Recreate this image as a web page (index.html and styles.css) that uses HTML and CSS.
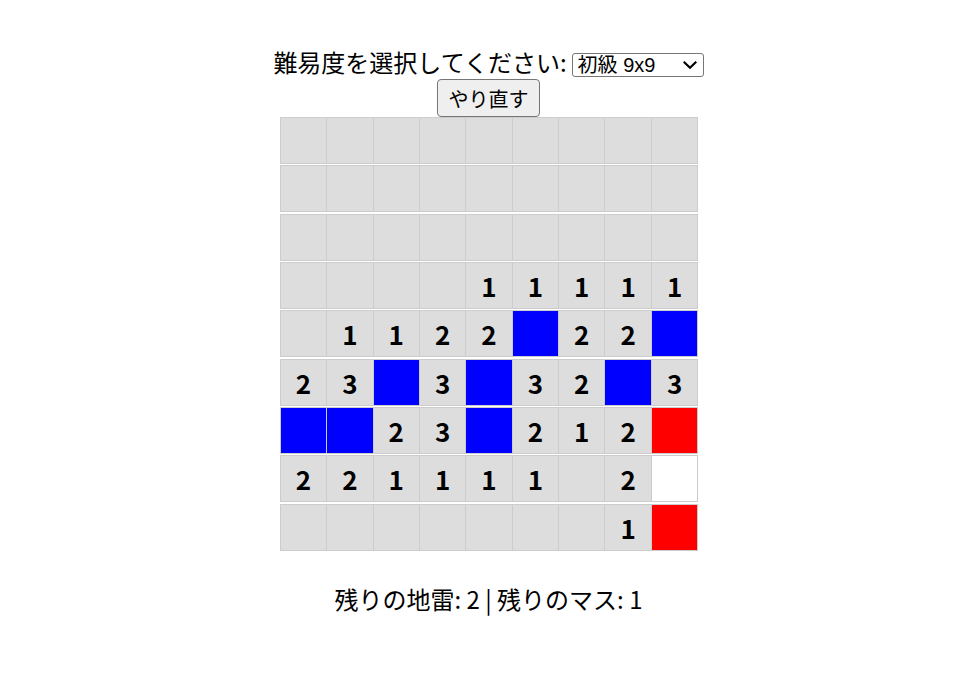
FILE: index.html
```html
<!DOCTYPE html>
<html lang="ja">
<head>
<meta charset="utf-8">
<title>マインスイーパー</title>
<link rel="stylesheet" href="styles.css">
</head>
<body>
<div class="top">
  <div class="level-row">
    <label class="label" for="level">難易度を選択してください:</label>
    <select id="level" class="level">
      <option>初級 9x9</option>
      <option>中級 16x16</option>
      <option>上級 30x16</option>
    </select>
  </div>
  <button class="retry" type="button">やり直す</button>
</div>
<div class="board">
  <div class="row"><div class="cell"></div><div class="cell"></div><div class="cell"></div><div class="cell"></div><div class="cell"></div><div class="cell"></div><div class="cell"></div><div class="cell"></div><div class="cell"></div></div>
  <div class="row"><div class="cell"></div><div class="cell"></div><div class="cell"></div><div class="cell"></div><div class="cell"></div><div class="cell"></div><div class="cell"></div><div class="cell"></div><div class="cell"></div></div>
  <div class="row"><div class="cell"></div><div class="cell"></div><div class="cell"></div><div class="cell"></div><div class="cell"></div><div class="cell"></div><div class="cell"></div><div class="cell"></div><div class="cell"></div></div>
  <div class="row"><div class="cell"></div><div class="cell"></div><div class="cell"></div><div class="cell"></div><div class="cell">1</div><div class="cell">1</div><div class="cell">1</div><div class="cell">1</div><div class="cell">1</div></div>
  <div class="row"><div class="cell"></div><div class="cell">1</div><div class="cell">1</div><div class="cell">2</div><div class="cell">2</div><div class="cell flag"></div><div class="cell">2</div><div class="cell">2</div><div class="cell flag"></div></div>
  <div class="row"><div class="cell">2</div><div class="cell">3</div><div class="cell flag"></div><div class="cell">3</div><div class="cell flag"></div><div class="cell">3</div><div class="cell">2</div><div class="cell flag"></div><div class="cell">3</div></div>
  <div class="row"><div class="cell flag"></div><div class="cell flag"></div><div class="cell">2</div><div class="cell">3</div><div class="cell flag"></div><div class="cell">2</div><div class="cell">1</div><div class="cell">2</div><div class="cell mine"></div></div>
  <div class="row"><div class="cell">2</div><div class="cell">2</div><div class="cell">1</div><div class="cell">1</div><div class="cell">1</div><div class="cell">1</div><div class="cell"></div><div class="cell">2</div><div class="cell hidden"></div></div>
  <div class="row"><div class="cell"></div><div class="cell"></div><div class="cell"></div><div class="cell"></div><div class="cell"></div><div class="cell"></div><div class="cell"></div><div class="cell">1</div><div class="cell mine"></div></div>
</div>
<p class="status">残りの地雷: 2 | 残りのマス: 1</p>
</body>
</html>
```
FILE: styles.css
```css
body {
  margin: 0;
  background: #fff;
  color: #000;
  font-family: "Noto Sans CJK JP", sans-serif;
}

.top {
  display: flex;
  flex-direction: column;
  align-items: center;
  padding-top: 44.6px;
}

.level-row {
  display: flex;
  align-items: flex-start;
  height: 34.75px;
}

.label {
  font-size: 24px;
  line-height: 34.75px;
}

.level {
  -webkit-appearance: none;
  appearance: none;
  box-sizing: border-box;
  margin: 8.7px 0 0 5px;
  padding: 0 0 0 5px;
  width: 132px;
  height: 23.6px;
  font-size: 20px;
  line-height: 21px;
  font-family: "Liberation Sans", "Noto Sans CJK JP", sans-serif;
  color: #000;
  border: 1px solid #767676;
  border-radius: 3px;
  background-color: #fff;
  background-image: url("data:image/svg+xml,%3Csvg xmlns='http://www.w3.org/2000/svg' width='14' height='9' viewBox='0 0 14 9'%3E%3Cpath d='M1.5 1.5 L7 6.8 L12.5 1.5' fill='none' stroke='%23000' stroke-width='2.2' stroke-linecap='square'/%3E%3C/svg%3E");
  background-repeat: no-repeat;
  background-position: right 5.5px center;
  background-size: 14px 9px;
}

.retry {
  width: 103px;
  height: 37.4px;
  padding: 0;
  font-size: 20px;
  font-family: "Noto Sans CJK JP", sans-serif;
  color: #000;
  background: #efefef;
  border: 1px solid #767676;
  border-radius: 4px;
}

.board {
  display: flex;
  flex-direction: column;
  gap: 1.33px;
  width: max-content;
  margin: 0.3px auto 0;
  padding-left: 1px;
}

.row {
  display: flex;
}

.cell {
  box-sizing: border-box;
  width: 47.4px;
  height: 47px;
  border: 1px solid #ccc;
  background: #ddd;
  display: flex;
  align-items: center;
  justify-content: center;
  font-size: 26px;
  font-weight: bold;
}

.cell + .cell {
  margin-left: -1px;
}

.cell.flag {
  background: #00f;
}

.cell.mine {
  background: #f00;
}

.cell.hidden {
  background: #fff;
}

.status {
  margin: 31px 0 0;
  text-align: center;
  font-size: 24px;
  line-height: 34.75px;
}
```
